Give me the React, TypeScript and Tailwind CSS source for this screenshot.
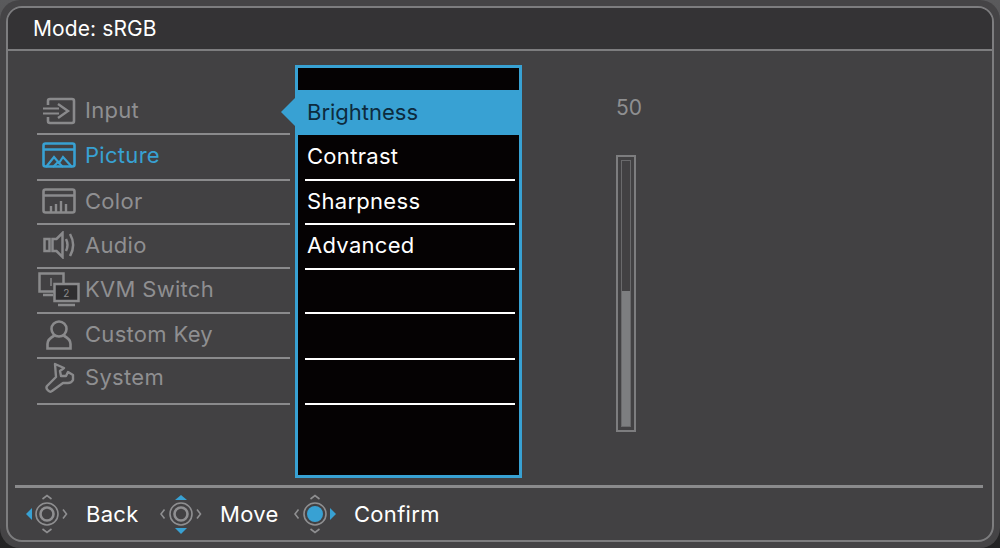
import * as React from "react";

const GRAY = "#8a8a8c";
const BLUE = "#38a1d3";

function InputIcon() {
  return (
    <svg width="34" height="28" viewBox="0 0 34 28" fill="none" stroke={GRAY} strokeWidth="2.6">
      <path d="M6 8V4a2 2 0 0 1 2-2h22a2 2 0 0 1 2 2v20a2 2 0 0 1-2 2H8a2 2 0 0 1-2-2v-4" />
      <path d="M1 11.5h16M1 16.5h16" strokeWidth="2.2" />
      <path d="M16 7l10 7-10 7" strokeWidth="2.4" />
    </svg>
  );
}

function PictureIcon() {
  return (
    <svg width="34" height="26" viewBox="0 0 34 26" fill="none" stroke={BLUE} strokeWidth="2.6">
      <rect x="1.5" y="1.5" width="31" height="23" rx="2" />
      <path d="M1.5 7.5h31" />
      <path d="M4 25l8-10 5 6 4-6 9 10" strokeWidth="2.2" />
      <path d="M11 25l5-5 5 5" strokeWidth="2" />
    </svg>
  );
}

function ColorIcon() {
  return (
    <svg width="34" height="26" viewBox="0 0 34 26" fill="none" stroke={GRAY} strokeWidth="2.6">
      <rect x="1.5" y="1.5" width="31" height="23" rx="2" />
      <path d="M1.5 7.5h31" />
      <path d="M9 24v-6M14 24v-8M19 24v-11M24 24v-8" strokeWidth="2.4" />
    </svg>
  );
}

function AudioIcon() {
  return (
    <svg width="32" height="28" viewBox="0 0 32 28" fill="none" stroke={GRAY} strokeWidth="2.5">
      <rect x="1.5" y="8" width="5" height="12" />
      <path d="M9.5 8h4l6-6v24l-6-6h-4z" />
      <path d="M23 8c2 4 2 8 0 12" />
      <path d="M27 3c4 7 4 15 0 22" />
    </svg>
  );
}

function KvmIcon() {
  return (
    <svg width="42" height="36" viewBox="0 0 42 36" fill="none" stroke={GRAY} strokeWidth="2.5">
      <rect x="1.5" y="1.5" width="24" height="18" />
      <path d="M13 6v8" strokeWidth="1.4" />
      <path d="M5 23h10" />
      <rect x="16.5" y="12" width="24" height="17" fill="#2f2e30" />
      <path d="M20 33h17" />
      <text x="28.5" y="25" textAnchor="middle" fontSize="10" fill={GRAY} stroke="none" fontFamily="Inter, sans-serif">
        2
      </text>
    </svg>
  );
}

function UserIcon() {
  return (
    <svg width="26" height="30" viewBox="0 0 26 30" fill="none" stroke={GRAY} strokeWidth="2.6">
      <ellipse cx="13" cy="9" rx="7.5" ry="7.5" />
      <path d="M8.5 15.5c-4 2-7 5-7 8.500v4.500h23V24c0-3.500-3-6.500-7-8.500" />
    </svg>
  );
}

function WrenchIcon() {
  return (
    <svg width="31" height="31" viewBox="0 0 31 31" fill="none" stroke={GRAY} strokeWidth="2.4" strokeLinejoin="round">
      <path d="M11 2l9 4-4 3 1 5 5 0 2-4 5 3v5c-1 2-3 3-5 3h-5L8 29c-2 2-7-2-5-5l9-9z" />
    </svg>
  );
}

function Joystick({ active }: { active: "left" | "vertical" | "center" }) {
  const c = "#8f8f91";
  return (
    <svg width="42" height="42" viewBox="0 0 42 42" fill="none" stroke={c} strokeWidth="1.6">
      {active === "vertical" ? (
        <>
          <path d="M15 7l6-5 6 5z" fill={BLUE} stroke="none" />
          <path d="M15 35l6 6 6-6z" fill={BLUE} stroke="none" />
        </>
      ) : (
        <>
          <path d="M16.500 6l4.500-3.500 4.500 3.500" />
          <path d="M16.500 36l4.500 3.500 4.500-3.500" />
        </>
      )}
      {active === "vertical" ? (
        <>
          <path d="M4.500 16.500L1 21l3.500 4.500" />
          <path d="M37 16.500L40.500 21 37 25.500" />
        </>
      ) : active === "left" ? (
        <>
          <path d="M6 15l-6 6 6 6z" fill={BLUE} stroke="none" />
          <path d="M37 16.500L40.500 21 37 25.500" />
        </>
      ) : (
        <>
          <path d="M4.500 16.500L1 21l3.500 4.500" />
          <path d="M36 15l6 6-6 6z" fill={BLUE} stroke="none" />
        </>
      )}
      {active === "center" ? (
        <>
          <circle cx="21" cy="21" r="11" />
          <circle cx="21" cy="21" r="8" fill={BLUE} stroke="none" />
        </>
      ) : (
        <>
          <circle cx="21" cy="21" r="11" />
          <circle cx="21" cy="21" r="6.500" strokeWidth="2.6" />
        </>
      )}
    </svg>
  );
}

const menuRows = [
  { label: "Input", icon: <InputIcon />, h: "h-[46px] pb-[1px]" },
  { label: "Picture", icon: <PictureIcon />, h: "h-[46px] pb-[4px]", active: true },
  { label: "Color", icon: <ColorIcon />, h: "h-[44px] pb-[2px]" },
  { label: "Audio", icon: <AudioIcon />, h: "h-[44px] pb-[2px]" },
  { label: "KVM Switch", icon: <KvmIcon />, h: "h-[45px] pb-[2px]" },
  { label: "Custom Key", icon: <UserIcon />, h: "h-[45px] pb-[2px]" },
  { label: "System", icon: <WrenchIcon />, h: "h-[46px] pb-[7px]" },
];

const subRows = [
  { label: "Contrast", h: "h-[46px]" },
  { label: "Sharpness", h: "h-[44px]" },
  { label: "Advanced", h: "h-[45px]" },
  { label: "", h: "h-[44px]" },
  { label: "", h: "h-[46px]" },
  { label: "", h: "h-[45px]" },
];

export default function App() {
  return (
    <div className="h-[548px] w-[1000px] overflow-hidden bg-gradient-to-b from-[#5a5a5c] to-[#232324] font-['Inter',sans-serif]">
      <div className="h-full rounded-[20px] bg-[#454446] p-[6px]">
        <div className="flex h-full flex-col overflow-hidden rounded-[16px] border-2 border-[#7d7d7f] bg-[#424143]">
          <div className="flex h-[43px] shrink-0 items-center border-b-2 border-[#7d7d7f] bg-[#343335] pl-[25px] text-[21px] tracking-[0.1px] text-white">
            Mode: sRGB
          </div>

          <div className="flex h-[434px] shrink-0">
            {/* Left menu */}
            <div className="ml-[29px] mt-[38px] w-[253px]">
              {menuRows.map((row) => (
                <div
                  key={row.label}
                  className={`flex items-center border-b-2 border-[#8a8a8c] ${row.h} ${
                    row.active ? "text-[#38a1d3]" : "text-[#8f8f91]"
                  } text-[22px] tracking-[0.3px]`}
                >
                  <div className="flex w-[48px] shrink-0 justify-center pr-[4px]">{row.icon}</div>
                  <span>{row.label}</span>
                </div>
              ))}
            </div>

            {/* Sub menu */}
            <div className="ml-[5px] mt-[14px] flex h-[413px] w-[227px] flex-col border-[3px] border-[#38a1d3] bg-[#050203]">
              <div className="h-[22px] shrink-0" />
              <div className="relative -mx-[3px] flex h-[45px] shrink-0 items-center bg-[#38a1d3] pl-[12px] text-[22px] text-[#0d2b3e]">
                <div className="absolute -left-[14px] top-[8px] h-0 w-0 border-y-[14px] border-r-[14px] border-y-transparent border-r-[#38a1d3]" />
                Brightness
              </div>
              {subRows.map((row, i) => (
                <div
                  key={i}
                  className={`ml-[7px] mr-[4px] flex shrink-0 items-center border-b-2 border-white pb-[2px] pl-[2px] text-[22px] tracking-[0.3px] text-white ${row.h}`}
                >
                  {row.label}
                </div>
              ))}
            </div>

            {/* Value and slider */}
            <div className="ml-[94px] mt-[44px] flex flex-col">
              <div className="h-[60px] text-[21px] leading-[26px] text-[#8f8f91]">50</div>
              <div className="flex h-[277px] w-[20px] flex-col border-2 border-[#7d7d7f] p-[3px]">
                <div className="flex flex-1 flex-col justify-end border border-[#6a6a6c]">
                  <div className="h-[135px] bg-[#7d7e80]" />
                </div>
              </div>
            </div>
          </div>

          {/* Footer */}
          <div className="ml-[7px] mr-[9px] flex flex-1 items-center border-t-[3px] border-[#8a8a8c] pl-[11px] text-[22px] tracking-[0.3px] text-white">
            <Joystick active="left" />
            <span className="ml-[18px] w-[74px]">Back</span>
            <Joystick active="vertical" />
            <span className="ml-[18px] w-[74px]">Move</span>
            <Joystick active="center" />
            <span className="ml-[18px]">Confirm</span>
          </div>
        </div>
      </div>
    </div>
  );
}
